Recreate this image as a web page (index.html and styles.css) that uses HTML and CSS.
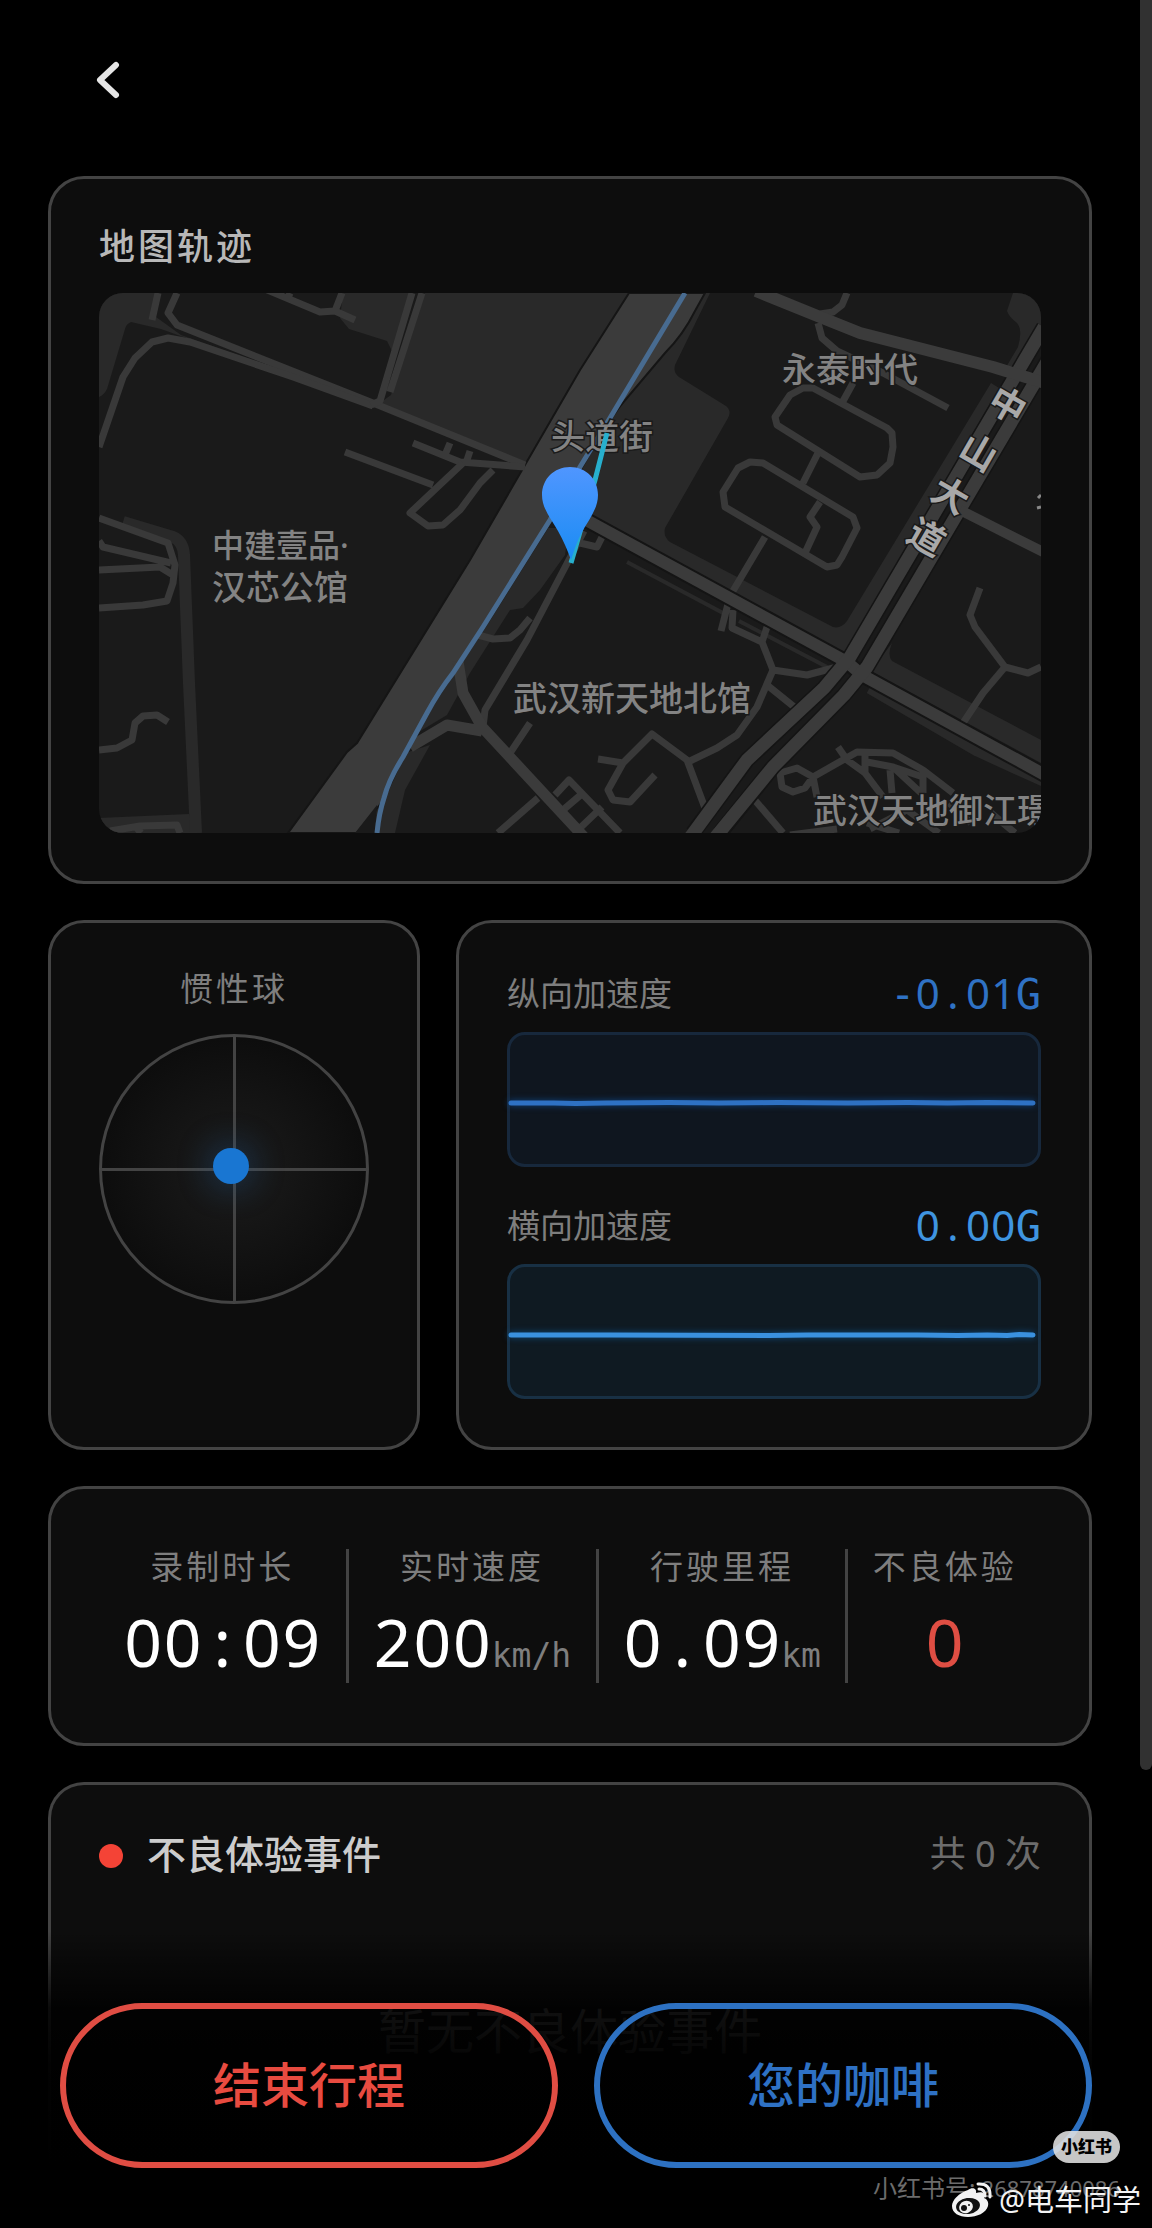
FILE: index.html
```html
<!DOCTYPE html>
<html lang="zh-CN">
<head>
<meta charset="utf-8">
<meta name="viewport" content="width=device-width, initial-scale=1">
<title>行程记录</title>
<link rel="stylesheet" href="styles.css">
</head>
<body>
<div class="app">
  <header class="topbar">
    <button class="back" type="button" aria-label="返回">
      <svg width="24" height="38" viewBox="0 0 24 38" fill="none" stroke="#e6e6e6" stroke-width="6" stroke-linecap="round" stroke-linejoin="round"><path d="M20 4L4 19L20 34"/></svg>
    </button>
  </header>

  <main class="content">
    <section class="card">
      <h2 class="title">地图轨迹</h2>
      <svg class="map" viewBox="0 0 942 540" role="img" aria-label="地图轨迹">
        <defs>
          <linearGradient id="pin" x1="0" y1="0" x2="0" y2="1"><stop offset="0" stop-color="#5096ff"/><stop offset="1" stop-color="#1a8cf4"/></linearGradient>
        </defs>
        <rect width="942" height="540" fill="#1a1a1a"/>
        <!-- blocks -->
        <g fill="#292929">
          <path d="M0 0H60L57 24L82 42L150 66L140 68L90 46L62 36L32 29Q27 31 26 36L8 96Q5 102 0 104Z"/>
          <path d="M244 0H314L293 58L288 48L250 36L241 25Z"/>
          <path d="M326 0L292 102L278 112L426 172L481 77L530 0Z"/>
          <path d="M611 0L576 72Q574 80 580 84L627 113Q633 118 629 125L566 235Q564 244 571 249L734 334Q742 336 748 328L892 90L900 95L744 364L470 215L440 232L554 67L604 0Z"/>
          <path d="M445 235L470 235L466 262L441 297L424 315L411 317L371 380L348 422L318 440Z"/>
          <path d="M300 462L331 452L306 497L296 540H256Z"/>
          <path d="M914 0L908 18Q910 24 918 30Q924 37 919 54L906 76L914 80L942 34V0Z"/>
          <path d="M793 350Q788 362 793 368L942 447V470L772 378Z"/>
          <path d="M0 525L90 521L102 540H0Z"/>
        </g>
        <g fill="none" stroke="#292929" stroke-linejoin="round">
          <path stroke-width="12" d="M24 229L74 244Q84 248 85 262L90 390L97 540"/>
          <path stroke-width="4" d="M528 269L624 320M640 328L728 374"/>
          <path stroke-width="9" d="M770 396L878 459L946 490"/>
        </g>
        <!-- boulevard along the river -->
        <path d="M530 0H606L596 18Q584 42 566 60L511 125L455 224L384 337L328 420L304 464L284 508L258 540H189L248 459L258 450L371 267L481 77Z" fill="#3b3b3b" stroke="#151515" stroke-width="2"/>
        <path d="M278 512L256 540H276Z" fill="#1a1a1a"/>
        <!-- minor streets -->
        <g fill="none" stroke="#393939" stroke-width="7" stroke-linejoin="round">
          <path d="M78 0L69 20L78 32L274 110L426 172"/>
          <path d="M0 154L24 84L36 65L53 49L69 45L91 49L194 84L274 113"/>
          <path d="M59 0L53 27M166 -4L221 19L236 18L256 27M236 18L243 0M191 0L188 7"/>
          <path d="M313 0L281 108L272 112M323 0L291 99"/>
          <path d="M314 150L361 169L426 174M351 150L346 162M371 158L367 170"/>
          <path d="M246 159L334 192M364 170L311 220L329 233L344 232L361 217L381 190L394 177"/>
          <path d="M0 225L69 250L76 272L74 290L68 308L44 312L0 315M0 248L4 254L72 270M0 277L61 274L74 282"/>
          <path d="M0 457L18 455L33 447L36 430L44 423L58 422L69 429"/>
          <path d="M11 538L41 533L78 532L81 540M36 533L42 540"/>
          <path d="M748 0L743 12L734 19L721 21"/>
          <path d="M719 30L723 45L738 58L755 66L784 80L849 115"/>
          <path d="M704 95L691 102L676 124L678 132L761 184L778 182L791 170L794 154L793 140L788 135L714 95ZM743 110L754 90"/>
          <path d="M651 169L639 175L624 199L626 214L728 274L738 272L743 264L758 235L754 224L664 170ZM719 160L704 190M721 209L711 224L718 234L706 260"/>
          <path d="M666 244L631 303L622 338M634 317L633 335L663 349L674 377L658 414L638 442L618 455L589 469M668 334L663 349M674 377L708 382L738 374M668 392L699 417"/>
          <path d="M881 295L871 322L876 334L906 374L929 380L942 374M906 374L884 400L864 430"/>
          <path d="M499 466L524 470L553 441L588 467L606 515M524 470L509 497L514 507L531 509L556 482"/>
          <path d="M654 505L684 540"/>
          <path d="M681 480L683 494L694 499L706 495L714 484L698 475ZM714 484L758 459L794 460L824 477L854 500M739 454L748 467L766 480L784 504M766 460V480M768 469L794 474L822 500M794 474L824 484V500M791 477L793 500M714 484L718 504"/>
          <path d="M691 542L738 536M771 536L808 517L840 540M850 510L872 530M892 520L916 540M768 530L800 540"/>
          <path d="M485 238L428 347L386 417L384 434M481 250L498 254L503 244"/>
          <path d="M379 342L394 346L411 345L421 337L431 325M431 430L411 460"/>
          <path d="M439 505L399 540M456 502L470 487L521 540M464 517L484 500M481 535L503 514"/>
        </g>
        <!-- main roads -->
        <g fill="none" stroke-linejoin="round">
          <g stroke="#141414">
            <path stroke-width="16" d="M478 222L748 369L763 382L946 482"/>
            <path stroke-width="16" d="M945 34L808 267L751 364L725 395L648 467L594 540M952 62L831 267L768 374L745 402L674 474L621 540"/>
          </g>
          <g stroke="#3b3b3b">
            <path stroke-width="12" d="M478 222L748 369L763 382L946 482"/>
            <path stroke-width="13" d="M945 34L808 267L751 364L725 395L648 467L590 546M952 62L831 267L768 374L745 402L674 474L615 546"/>
            <path stroke-width="12" d="M657 -2L721 24L761 40L894 74L946 90"/>
            <path stroke-width="10" d="M861 217L946 260"/>
            <path stroke-width="11" d="M359 368L364 400L383 434L485 544M311 454L348 432L383 438"/>
          </g>
        </g>
        <path d="M586 0L511 125L481 174L451 227L384 334L354 380Q340 398 328 420L304 464Q290 486 285 505Q280 520 278 540" fill="none" stroke="#486b90" stroke-width="5"/>
        <g class="map-label">
          <text x="452" y="156">头道街</text>
          <text x="683" y="89">永泰时代</text>
          <text x="113" y="264" class="map-label-tight">中建壹品·</text>
          <text x="113" y="307">汉芯公馆</text>
          <text x="414" y="418">武汉新天地北馆</text>
          <text x="714" y="530">武汉天地御江璟</text>
        </g>
        <g class="map-label map-label-road">
          <text transform="translate(908 113) rotate(30)" y="12">中</text>
          <text transform="translate(879 160) rotate(30)" y="12">山</text>
          <text transform="translate(851 203) rotate(30)" y="12">大</text>
          <text transform="translate(827 245) rotate(30)" y="12">道</text>
        </g>
        <path d="M939 205L942 202M938 215L942 214" stroke="#888" stroke-width="3"/>
        <path d="M508 140L496 187L472 270" fill="none" stroke="#27afcd" stroke-width="5"/>
        <path d="M471 174C487 174 499 186 499 202C499 216 489 228 483 239C478 248 475 258 472 267C469 258 464 247 459 238C453 227 443 216 443 202C443 186 455 174 471 174Z" fill="url(#pin)"/>
      </svg>
    </section>

    <div class="row">
      <section class="card inertia">
        <h2 class="label spaced">惯性球</h2>
        <div class="ball"><span class="ball-dot"></span></div>
      </section>
      <section class="card accel">
        <div class="metric">
          <div class="metric-head"><h2 class="label">纵向加速度</h2><output class="mono blue"><i class="sign">-</i><i>0</i><i>.</i><i>0</i><i>1</i><i class="sign">G</i></output></div>
          <div class="chart chart-blue">
            <svg viewBox="0 0 528 32" preserveAspectRatio="none"><path d="M1 22H44L66 23L96 22L160 21L210 22L270 21L340 22L400 21L440 22L480 21L526 22"/></svg>
          </div>
        </div>
        <div class="metric">
          <div class="metric-head"><h2 class="label">横向加速度</h2><output class="mono sky"><i>0</i><i>.</i><i>0</i><i>0</i><i class="sign">G</i></output></div>
          <div class="chart chart-sky">
            <svg viewBox="0 0 528 32" preserveAspectRatio="none"><path d="M1 22H100L260 23L300 22H410L450 23L480 22L500 23L512 21L526 22"/></svg>
          </div>
        </div>
      </section>
    </div>

    <section class="card stats">
      <div class="stat"><span class="label spaced">录制时长</span><span class="value mono"><i>0</i><i>0</i><i>:</i><i>0</i><i>9</i></span></div>
      <div class="stat"><span class="label spaced">实时速度</span><span class="value mono"><i>2</i><i>0</i><i>0</i><small>km/h</small></span></div>
      <div class="stat"><span class="label spaced">行驶里程</span><span class="value mono"><i>0</i><i>.</i><i>0</i><i>9</i><small>km</small></span></div>
      <div class="stat"><span class="label spaced">不良体验</span><span class="value mono red"><i>0</i></span></div>
    </section>

    <section class="card events">
      <div class="events-head">
        <span class="events-dot"></span>
        <h2 class="events-title">不良体验事件</h2>
        <span class="events-count">共 0 次</span>
      </div>
      <p class="events-empty">暂无不良体验事件</p>
    </section>
  </main>

  <footer class="actions">
    <button class="action action-end" type="button">结束行程</button>
    <button class="action action-coffee" type="button">您的咖啡</button>
  </footer>

  <div class="scrollbar"></div>

  <div class="note-mark">
    <span class="note-badge">小红书</span>
    <span class="note-id">小红书号: <span class="note-number">26878740086</span></span>
  </div>
  <div class="weibo-mark">
    <svg width="42" height="36" viewBox="0 0 42 36">
      <path fill="#f2f2f2" d="M17 8C21 5 26 6 25 11C31 9 35 11 33 16C36 17 38 20 37 24C35 31 26 35 17 35C8 35 1 31 1 24C1 18 8 11 17 8Z"/>
      <ellipse cx="17" cy="24" rx="12" ry="8" transform="rotate(-8 17 24)" fill="#111"/>
      <ellipse cx="15" cy="25" rx="7" ry="6" transform="rotate(-20 15 25)" fill="#f2f2f2"/>
      <circle cx="13" cy="26" r="3" fill="#111"/><circle cx="18" cy="23" r="1" fill="#111"/>
      <path fill="none" stroke="#f2f2f2" stroke-width="3" stroke-linecap="round" d="M28 7Q34 7 34 14M27 2Q40 1 39 15"/>
    </svg>
    <span>@电车同学</span>
  </div>
</div>
</body>
</html>
```
FILE: styles.css
```css
* { box-sizing: border-box; }

body {
  margin: 0;
  background: #000;
  color: #ccc;
  font-family: "Noto Sans", "Noto Sans CJK SC", sans-serif;
}

h2, p { margin: 0; font-weight: 400; }
button { font-family: inherit; cursor: pointer; }

.app {
  position: relative;
  display: flex;
  flex-direction: column;
  min-height: 100vh;
}

.topbar {
  display: flex;
  align-items: center;
  height: 176px;
  padding: 0 96px 16px;
}

.back {
  display: flex;
  padding: 0;
  border: 0;
  background: none;
}

.content {
  flex: 1;
  display: flex;
  flex-direction: column;
  gap: 36px;
  padding: 0 60px 0 48px;
}

.card {
  padding: 48px;
  border: 3px solid #434343;
  border-radius: 36px;
  background: #0d0d0d;
}

.title {
  margin-bottom: 26px;
  color: #b8b8b8;
  font-size: 36px;
  font-weight: 500;
  line-height: 40px;
  letter-spacing: 3px;
}

.label {
  color: #7e7e7e;
  font-size: 33px;
  line-height: 36px;
}

.spaced { letter-spacing: 3px; }

.map {
  display: block;
  width: 100%;
  height: auto;
  border-radius: 24px;
}

.map-label {
  fill: #838383;
  font-size: 34px;
  font-weight: 500;
  stroke: #1a1a1a;
  stroke-width: 3px;
  paint-order: stroke;
}

.map-label-tight { font-size: 32px; }
.map-label-road { fill: #a8a8a8; font-size: 36px; font-weight: 700; text-anchor: middle; }

.row {
  display: grid;
  grid-template-columns: 31fr 53fr;
  gap: 36px;
}

.inertia {
  display: flex;
  flex-direction: column;
  gap: 27px;
  text-align: center;
}

.ball {
  position: relative;
  aspect-ratio: 1;
  border: 3px solid #434343;
  border-radius: 50%;
  background:
    linear-gradient(#434343, #434343) center / 3px 100% no-repeat,
    linear-gradient(#434343, #434343) center / 100% 3px no-repeat,
    radial-gradient(circle, #1c1c1c, #0d0d0d 70%);
}

.ball-dot {
  position: absolute;
  left: 49%;
  top: 49%;
  width: 36px;
  height: 36px;
  border-radius: 50%;
  background: #1976d2;
  box-shadow: 0 0 36px rgba(25, 118, 210, .4);
  transform: translate(-50%, -50%);
}

.accel {
  display: flex;
  flex-direction: column;
  gap: 36px;
}

.metric {
  display: flex;
  flex-direction: column;
  gap: 12px;
}

.metric-head {
  display: flex;
  align-items: center;
  justify-content: space-between;
  height: 49px;
  padding-bottom: 4px;
}

/* fixed-width readout: every character sits in its own equal cell */
.mono {
  display: flex;
  align-items: baseline;
  font-size: 42px;
  line-height: 45px;
}

.mono i {
  width: 0.6em;
  font-style: normal;
  text-align: center;
}

.mono .sign { font-family: "DejaVu Sans Mono", monospace; }

.blue { color: #2f72c4; }
.sky { color: #3f95e0; }

.chart {
  display: flex;
  align-items: center;
  height: 135px;
  padding-right: 3px;
  border: 3px solid;
  border-radius: 18px;
}

.chart svg {
  width: 100%;
  height: 16px;
  fill: none;
  stroke-width: 5px;
  stroke-linecap: round;
  overflow: visible;
}

.chart path { vector-effect: non-scaling-stroke; }

.chart-blue { border-color: #17283c; background: #0f161f; }
.chart-blue svg { stroke: #2e71c3; filter: drop-shadow(0 0 3px #0d4382); }
.chart-sky { border-color: #183044; background: #0f1a22; }
.chart-sky svg { stroke: #3a91df; filter: drop-shadow(0 0 3px #0d4c82); }

.stats {
  display: flex;
  padding: 60px 48px;
}

.stat {
  flex: 1 1 auto;
  display: flex;
  flex-direction: column;
  align-items: center;
  gap: 15px;
  padding: 0 24px;
}

.stat + .stat { border-left: 3px solid #434343; }

.value {
  color: #fff;
  font-size: 66px;
  line-height: 83px;
}

.value small {
  color: #7e7e7e;
  font-family: "DejaVu Sans Mono", monospace;
  font-size: 33px;
  line-height: 39px;
}

.value.red { color: #df4e43; }

.events {
  flex: 1;
  border-bottom: 0;
  border-radius: 36px 36px 0 0;
}

.events-head {
  display: flex;
  align-items: center;
  gap: 24px;
  height: 45px;
  line-height: 42px;
}

.events-dot {
  width: 24px;
  height: 24px;
  border-radius: 50%;
  background: #f44336;
}

.events-title {
  flex: 1;
  padding-bottom: 3px;
  color: #ccc;
  font-size: 39px;
  font-weight: 500;
}

.events-count {
  padding-bottom: 3px;
  color: #6c6c6c;
  font-size: 36px;
}

.events-empty {
  margin-top: 117px;
  color: #666;
  font-size: 48px;
  line-height: 72px;
  text-align: center;
}

.actions {
  position: absolute;
  right: 0;
  bottom: 0;
  left: 0;
  display: flex;
  gap: 36px;
  padding: 72px 60px 60px;
  background: linear-gradient(transparent, rgba(0, 0, 0, .84) 26%, rgba(0, 0, 0, .96) 46%, #000 80%);
}

.action {
  flex: 1;
  height: 165px;
  padding-bottom: 9px;
  border: 6px solid;
  border-radius: 84px;
  background: none;
  font-size: 48px;
  font-weight: 500;
}

.action-end { border-color: #e04d43; color: #e84b40; }
.action-coffee { border-color: #2d71c2; color: #2e71c4; }

.scrollbar {
  position: absolute;
  top: 0;
  right: 0;
  width: 12px;
  height: 1770px;
  max-height: 80vh;
  border-radius: 0 0 6px 6px;
  background: #313131;
}

.note-mark {
  position: absolute;
  right: 32px;
  bottom: 24px;
  display: flex;
  flex-direction: column;
  align-items: flex-end;
  gap: 9px;
  color: #6c6c6c;
  font-size: 24px;
  line-height: 32px;
}

.note-badge {
  padding: 0 8px;
  border-radius: 16px;
  background: rgba(225, 225, 225, .88);
  color: #000;
  font-size: 17px;
  font-weight: 900;
}

.note-number { font-size: 22px; }

.weibo-mark {
  position: absolute;
  right: 11px;
  bottom: 8px;
  display: flex;
  align-items: center;
  gap: 6px;
  color: #f4f4f4;
  font-size: 29px;
  line-height: 40px;
}
```
